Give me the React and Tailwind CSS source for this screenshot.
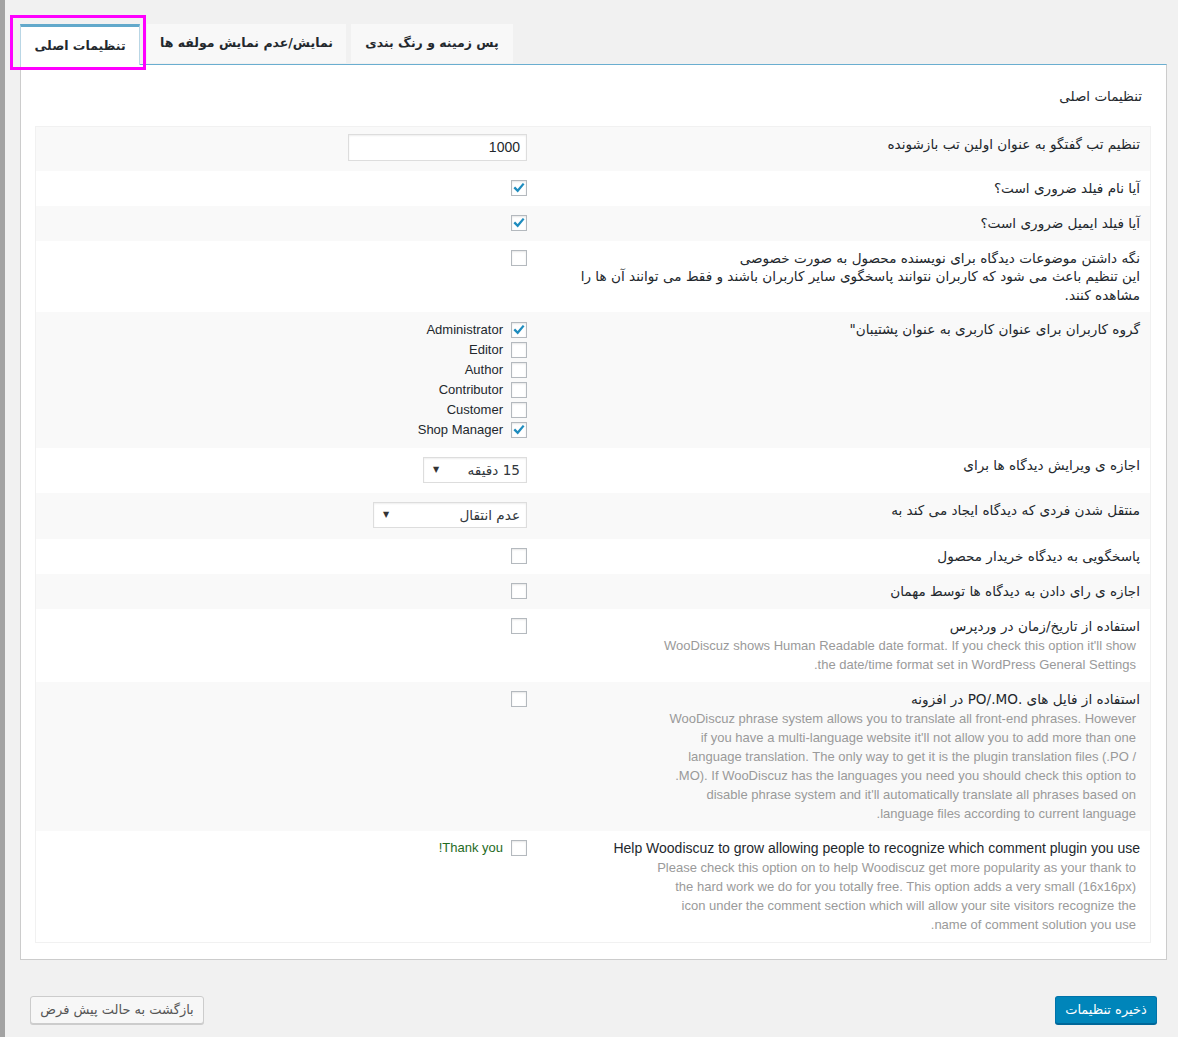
import React from "react";

function Check({ on }) {
  return (
    <span className="flex h-4 w-4 shrink-0 items-center justify-center border border-[#b4b9be] bg-white shadow-[inset_0_1px_2px_rgba(0,0,0,0.1)]">
      {on && (
        <svg viewBox="0 0 16 16" className="h-[14px] w-[14px]">
          <path d="M3.5 8.2l3 3 6-7.2" fill="none" stroke="#1e8cbe" strokeWidth="2.6" strokeLinecap="square" />
        </svg>
      )}
    </span>
  );
}

function Select({ value, width }) {
  return (
    <div className={`${width} flex h-[26px] items-center justify-between border border-[#ddd] bg-white pl-[9px] pr-[6px] font-['DejaVu_Sans',sans-serif] text-[13.6px] text-[#32373c] shadow-[inset_0_1px_2px_rgba(0,0,0,0.07)]`}>
      <span>{value}</span>
      <span className="text-[8px] text-[#333]">▼</span>
    </div>
  );
}

function Desc({ lines }) {
  return (
    <div className="mr-[4px] text-[13px] leading-[19px] text-[#9a9a9a] font-['Liberation_Sans',sans-serif]">
      {lines.map((l) => (
        <div key={l} dir="ltr" className="whitespace-nowrap text-right">
          {l}
        </div>
      ))}
    </div>
  );
}

function Row({ shade, label, en, desc, tight, ctrl = "pt-[9px] pb-[9px]", children }) {
  return (
    <div className={`grid grid-cols-[614px_1fr] ${shade ? "bg-[#f9f9f9]" : "bg-white"}`}>
      <div className={`pb-2 pl-[10px] pr-[10px] pt-2 ${tight ? "leading-[18.4px]" : "leading-[19px]"}`}>
        <div
          className={
            en
              ? "font-['Liberation_Sans',sans-serif] text-[14px]"
              : "font-['DejaVu_Sans',sans-serif] text-[13.6px]"
          }
        >
          {label}
        </div>
        {desc && <Desc lines={desc} />}
      </div>
      <div className={`flex items-start pr-[9px] ${ctrl}`}>{children}</div>
    </div>
  );
}

const roles = [
  ["Administrator", true],
  ["Editor", false],
  ["Author", false],
  ["Contributor", false],
  ["Customer", false],
  ["Shop Manager", true],
];

export default function App() {
  return (
    <div className="flex min-h-[1037px] bg-[#f1f1f1] font-['Liberation_Sans','DejaVu_Sans',sans-serif] text-[#23282d]">
      <div className="w-[5px] shrink-0 bg-[#a3a3a3]" />
      <div className="flex-1 pl-[15px] pr-[11px]">
        <div className="relative mt-[24px] flex h-[40px] items-start font-['DejaVu_Sans',sans-serif] text-[12.5px] font-bold">
          <div className="relative z-10 flex h-[41px] w-[120px] items-center justify-center border-x border-t-[3px] border-x-[#b9d6e5] border-t-[#62a9cb] bg-white">
            تنظیمات اصلی
          </div>
          <div className="ml-[7px] flex h-[39px] w-[199px] items-center justify-center bg-[#f8f8f8]">
            نمایش/عدم نمایش مولفه ها
          </div>
          <div className="ml-[5px] flex h-[39px] w-[162px] items-center justify-center bg-[#f8f8f8]">
            پس زمینه و رنگ بندی
          </div>
          <div className="absolute left-[-10px] top-[-9px] z-20 h-[55px] w-[136px] border-[3px] border-[#ff00ff]" />
        </div>

        <div className="border border-[#cccccc] border-t-[#6aaed0] bg-white pb-[16px] pl-[14px] pr-[15px] pt-[20px]">
          <h3 dir="rtl" className="mb-[19px] h-[22px] pr-[9px] font-['DejaVu_Sans',sans-serif] text-[13.5px] font-medium leading-[22px]">
            تنظیمات اصلی
          </h3>
          <div dir="rtl" className="border border-[#f1f1f1]">
            <Row shade label="تنظیم تب گفتگو به عنوان اولین تب بازشونده" ctrl="pt-[7px] pb-[10px]">
              <div className="flex h-[27px] w-[179px] items-center border border-[#ddd] bg-white px-[6px] text-[14px] shadow-[inset_0_1px_2px_rgba(0,0,0,0.07)]">
                1000
              </div>
            </Row>
            <Row label="آیا نام فیلد ضروری است؟">
              <Check on />
            </Row>
            <Row shade label="آیا فیلد ایمیل ضروری است؟">
              <Check on />
            </Row>
            <Row
              tight
              label={
                <>
                  نگه داشتن موضوعات دیدگاه برای نویسنده محصول به صورت خصوصی
                  <br />
                  این تنظیم باعث می شود که کاربران نتوانند پاسخگوی سایر کاربران باشند و فقط می توانند آن ها را
                  <br />
                  مشاهده کنند.
                </>
              }
            >
              <Check />
            </Row>
            <Row shade label={'گروه کاربران برای عنوان کاربری به عنوان پشتیبان"'} ctrl="pt-[10px] pb-[10px]">
              <div className="flex flex-col gap-1">
                {roles.map(([name, on]) => (
                  <div key={name} className="flex h-4 items-center gap-2 text-[13px]">
                    <Check on={on} />
                    <span>{name}</span>
                  </div>
                ))}
              </div>
            </Row>
            <Row label="اجازه ی ویرایش دیدگاه ها برای" ctrl="pt-[9px] pb-[10px]">
              <Select value="15 دقیقه" width="w-[104px]" />
            </Row>
            <Row shade label="منتقل شدن فردی که دیدگاه ایجاد می کند به" ctrl="pt-[9px] pb-[11px]">
              <Select value="عدم انتقال" width="w-[154px]" />
            </Row>
            <Row label="پاسخگویی به دیدگاه خریدار محصول">
              <Check />
            </Row>
            <Row shade label="اجازه ی رای دادن به دیدگاه ها توسط مهمان">
              <Check />
            </Row>
            <Row
              label="استفاده از تاریخ/زمان در وردپرس"
              desc={[
                "WooDiscuz shows Human Readable date format. If you check this option it'll show",
                ".the date/time format set in WordPress General Settings",
              ]}
            >
              <Check />
            </Row>
            <Row
              shade
              label="استفاده از فایل های .PO/.MO در افزونه"
              desc={[
                "WooDiscuz phrase system allows you to translate all front-end phrases. However",
                "if you have a multi-language website it'll not allow you to add more than one",
                "language translation. The only way to get it is the plugin translation files (.PO /",
                ".MO). If WooDiscuz has the languages you need you should check this option to",
                "disable phrase system and it'll automatically translate all phrases based on",
                ".language files according to current language",
              ]}
            >
              <Check />
            </Row>
            <Row
              en
              label="Help Woodiscuz to grow allowing people to recognize which comment plugin you use"
              desc={[
                "Please check this option on to help Woodiscuz get more popularity as your thank to",
                "the hard work we do for you totally free. This option adds a very small (16x16px)",
                "icon under the comment section which will allow your site visitors recognize the",
                ".name of comment solution you use",
              ]}
            >
              <div className="flex items-center gap-2 text-[13px] leading-4 text-[#1f6b1f]">
                <Check />
                <span>Thank you!</span>
              </div>
            </Row>
          </div>
        </div>

        <div className="mt-[36px] flex items-center justify-between px-[10px] font-['DejaVu_Sans',sans-serif] text-[13px]">
          <button className="h-[28px] w-[174px] rounded-[3px] border border-[#cccccc] bg-[#f7f7f7] text-[#555] shadow-[0_1px_0_#cccccc]">
            بازگشت به حالت پیش فرض
          </button>
          <button className="h-[28px] w-[102px] rounded-[3px] border border-[#0073aa] border-b-[#006799] bg-[#0085ba] text-white shadow-[0_1px_0_#006799]">
            ذخیره تنظیمات
          </button>
        </div>
      </div>
    </div>
  );
}
